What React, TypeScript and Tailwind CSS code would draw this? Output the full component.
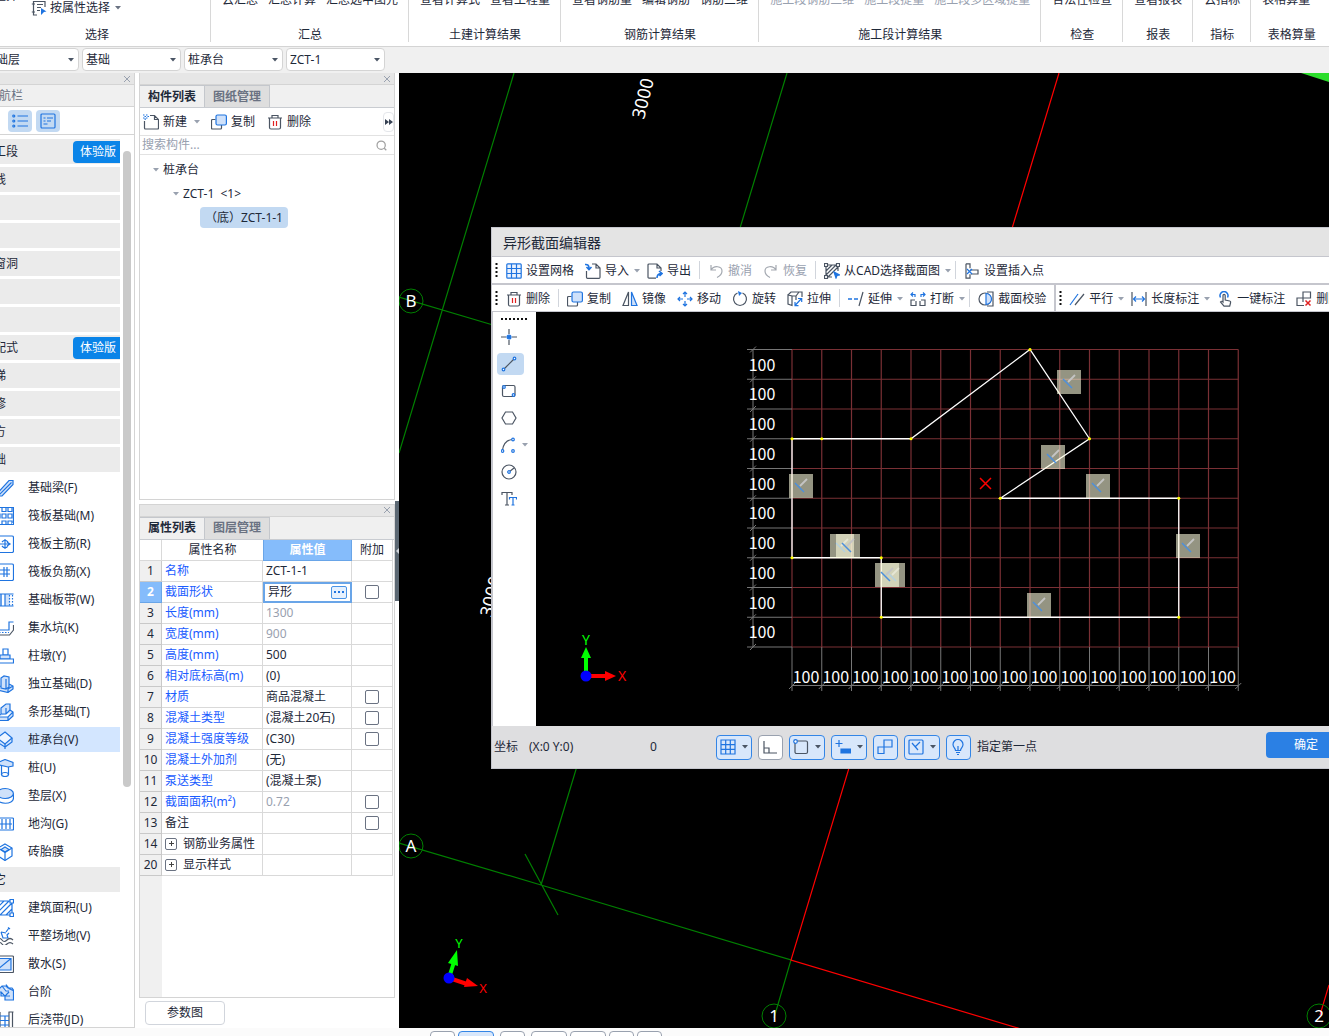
import { Fragment, ReactNode, useState } from "react";
import clsx from "clsx";

const BLUE = "#1f74e0";
const DARK = "#4b5563";
const PALE = "#cfe1fa";

const ribbonGroups = [
  { label: "汇总", items: ["云汇总", "汇总计算", "汇总选中图元"] },
  { label: "土建计算结果", items: ["查看计算式", "查看工程量"] },
  { label: "钢筋计算结果", items: ["查看钢筋量", "编辑钢筋", "钢筋三维"] },
  {
    label: "施工段计算结果",
    items: ["施工段钢筋三维", "施工段提量", "施工段多区域提量"],
    disabled: true,
  },
  { label: "检查", items: ["合法性检查"] },
  { label: "报表", items: ["查看报表"] },
  { label: "指标", items: ["云指标"] },
  { label: "表格算量", items: ["表格算量"] },
];

const filters = [
  { label: "楼层", value: "基础层" },
  { label: "分类", value: "基础" },
  { label: "构件类型", value: "桩承台" },
  { label: "构件", value: "ZCT-1" },
];

type NavItem = { name: string; trial?: boolean; icon?: ReactNode };

const navItems: NavItem[] = [
  { name: "施工段", trial: true },
  { name: "轴线" },
  { name: "柱" },
  { name: "墙" },
  { name: "门窗洞" },
  { name: "梁" },
  { name: "板" },
  { name: "装配式", trial: true },
  { name: "楼梯" },
  { name: "装修" },
  { name: "土方" },
  { name: "基础" },
  {
    name: "基础梁(F)",
    icon: <path d="M2 13.500 13 1.500h4v4L6 17H2zM2 17 15.500 3.500" fill={PALE} />,
  },
  {
    name: "筏板基础(M)",
    icon: (
      <path d="M1 .5h16.500v17H1M6 .5v4h4v-4M12 .5v4h4v-4M6 7h4v4H6zM12 7h4v4h-4zM6 17v-3h4v3M12 17v-3h4v3M1 7h3v4H1" />
    ),
  },
  {
    name: "筏板主筋(R)",
    icon: (
      <>
        <rect x="1" y="1" width="16.500" height="16.500" rx="1.500" />
        <path d="M9 4v10M3 9h10M6 7q3-3.500 6 0M6 11q3 3.500 6 0M11 7l3 2-3 2" />
      </>
    ),
  },
  {
    name: "筏板负筋(X)",
    icon: (
      <>
        <rect x="1" y="1" width="16.500" height="16.500" rx="1.500" />
        <path d="M3 7h11M3 11h11M8 4v10M11 4v10" />
      </>
    ),
  },
  {
    name: "基础板带(W)",
    icon: (
      <>
        <path d="M1 3h5v12H1M9 3h5v12H9" fill={PALE} stroke="none" />
        <path d="M1 3h16.500M1 15h16.500M5 3v12M9 3v12" />
        <path d="M13.500 4v11M16.500 4v11" strokeDasharray="1.500 1.500" />
      </>
    ),
  },
  {
    name: "集水坑(K)",
    icon: (
      <>
        <path d="M17.500 3H13v8H2" />
        <path d="M17.500 6v5l-4 5H2" stroke={DARK} />
        <path d="M3 13.500h10" strokeDasharray="1.500 1.500" />
      </>
    ),
  },
  {
    name: "柱墩(Y)",
    icon: (
      <>
        <path d="M7 2h5v6H7z" fill="#fff" />
        <path d="M4 8h10v4H4z" fill={PALE} />
        <path d="M1 12h16.500v4H1z" fill="#fff" />
      </>
    ),
  },
  {
    name: "独立基础(D)",
    icon: (
      <path d="M5 3l3-2 5 1v10l-3 2-5-1zM10 4v10M1 12l4-1M13 9l4 2v3l-5 3.500L1 15M12 14v3M17 11l-5 3" fill={PALE} />
    ),
  },
  {
    name: "条形基础(T)",
    icon: (
      <path d="M5 5l5-4h4v6l-4 4H5zM10 5v6M14 7l3 2v4l-5 4.500H1v-5l4-1M1 14h11l5-5M12 14v3" fill={PALE} />
    ),
  },
  {
    name: "桩承台(V)",
    icon: (
      <>
        <path d="M9 1l7 6-7 6-8-6z" fill="#eef5ff" />
        <path d="M16 7v4l-7 5V13M1 7v4l8 5v2.500" />
      </>
    ),
  },
  {
    name: "桩(U)",
    icon: (
      <>
        <path d="M3 3l6-2.500 8 3V7l-5 1-9-2z" fill={PALE} />
        <path d="M5.500 7v9M12.500 8v8" />
        <ellipse cx="9" cy="15.500" rx="3.500" ry="2" />
      </>
    ),
  },
  {
    name: "垫层(X)",
    icon: (
      <>
        <path d="M1 7v4c0 7 16.500 7 16.500 0V7" />
        <ellipse cx="9.200" cy="6.500" rx="8.200" ry="5" fill={PALE} />
      </>
    ),
  },
  {
    name: "地沟(G)",
    icon: (
      <>
        <rect x="1" y="3" width="16.500" height="12" rx="1" />
        <path d="M1 9h15M6 4v10M10 4v10M14 4v10" />
      </>
    ),
  },
  {
    name: "砖胎膜",
    icon: (
      <>
        <path d="M9 1l7 4v8l-7 4.500L2 13V5z" />
        <path d="M9 4l4 2.500L9 9 5 6.500z" fill={PALE} />
        <path d="M2 5l7 4.500L16 5M9 9.500v8" />
      </>
    ),
  },
  { name: "其它" },
  {
    name: "建筑面积(U)",
    icon: (
      <>
        <path d="M2 2h14v14H2M2 8l6-6M2 13 13 2M4 16 16 4M10 16l6-6" />
        <path d="M14 .5h3.500V4H14zM14 14h3.500v3.500H14z" fill="#fff" />
      </>
    ),
  },
  {
    name: "平整场地(V)",
    icon: (
      <>
        <path d="M13 1l-3 4M5 5l2 6h5l-1-3 2-2M5 5l5 1M12 .5l2 1.500" />
        <path d="M1 13q3-3 5 0t5 0 6 0M1 17q3-3 5 0t5 0 6 0" stroke={DARK} />
      </>
    ),
  },
  {
    name: "散水(S)",
    icon: (
      <>
        <rect x="1" y="1" width="16.500" height="16.500" rx="1" stroke={DARK} />
        <path d="M1 3.500h14V15H1M1 15 15 3.500" fill={PALE} />
      </>
    ),
  },
  {
    name: "台阶",
    icon: (
      <path d="M1 8l5-5h4l2 2h4l1.500 2v10H9v-4H5V9H1M6 3l4 5h3M10 1.500l3 4 4 2M5 9l4 4h5M9 13l4-4" fill={PALE} />
    ),
  },
  {
    name: "后浇带(JD)",
    icon: (
      <>
        <path d="M4 1v17M13 1v17M16.500 1v17M12.500 1h5M1 1h3" stroke={DARK} />
        <path d="M4 5h9M4 9.500h9M4 14h9M9 5v13" />
      </>
    ),
  },
];

type PropertyRow = {
  no: number;
  name: string;
  value?: string;
  check?: boolean;
  muted?: boolean;
  plain?: boolean;
  group?: boolean;
};

const properties: PropertyRow[] = [
  { no: 1, name: "名称", value: "ZCT-1-1" },
  { no: 2, name: "截面形状", value: "异形", check: true },
  { no: 3, name: "长度(mm)", value: "1300", muted: true },
  { no: 4, name: "宽度(mm)", value: "900", muted: true },
  { no: 5, name: "高度(mm)", value: "500" },
  { no: 6, name: "相对底标高(m)", value: "(0)" },
  { no: 7, name: "材质", value: "商品混凝土", check: true },
  { no: 8, name: "混凝土类型", value: "(混凝土20石)", check: true },
  { no: 9, name: "混凝土强度等级", value: "(C30)", check: true },
  { no: 10, name: "混凝土外加剂", value: "(无)" },
  { no: 11, name: "泵送类型", value: "(混凝土泵)" },
  { no: 12, name: "截面面积(m²)", value: "0.72", check: true, muted: true },
  { no: 13, name: "备注", check: true, plain: true },
  { no: 14, name: "钢筋业务属性", plain: true, group: true },
  { no: 20, name: "显示样式", plain: true, group: true },
];

const Icon = ({
  children,
  size = 16,
  box = 16,
  stroke = DARK,
}: {
  children: ReactNode;
  size?: number;
  box?: number;
  stroke?: string;
}) => (
  <svg
    width={size}
    height={size}
    viewBox={`0 0 ${box} ${box}`}
    fill="none"
    stroke={stroke}
    strokeWidth="1.200"
    className="flex-none"
    aria-hidden="true"
  >
    {children}
  </svg>
);

const Caret = ({ className = "text-gray-400" }: { className?: string }) => (
  <svg width="6" height="4" viewBox="0 0 6 4" className={clsx("flex-none", className)} aria-hidden="true">
    <path d="M0 0h6L3 3.500z" fill="currentColor" />
  </svg>
);

const icons = {
  trash: (
    <Icon>
      <path d="M1 4h14M5 4V1.500h6V4M2.500 4v9.500a1.500 1.500 0 0 0 1.500 1.500h8a1.500 1.500 0 0 0 1.500-1.500V4" />
      <path d="M6.500 7v5M9.500 7v5" stroke="#e02020" />
    </Icon>
  ),
  copy: (
    <Icon>
      <path d="M4.500 5.500h-3a1 1 0 0 0-1 1V14a1 1 0 0 0 1 1h8a1 1 0 0 0 1-1v-3" />
      <rect x="5" y="1" width="10.400" height="10" rx="1.500" fill={PALE} stroke={BLUE} />
    </Icon>
  ),
  create: (
    <Icon>
      <path d="M7 1.500h4.500l4 4V14a1 1 0 0 1-1 1h-12a1 1 0 0 1-1-1V7M11.500 1.500v4h4" />
      <path d="M0 1h1.500M3 1h1.500M1.500 2.500H3M0 4h1.500M3 4h1.500M4.500 2.500H6M1.500 5.200H3" stroke={BLUE} />
    </Icon>
  ),
  grid: (
    <Icon stroke={BLUE}>
      <rect x=".8" y=".8" width="14.400" height="14.400" rx="1" fill="#eaf2fe" />
      <path d="M5.500 1v14M10.500 1v14M1 5.500h14M1 10.500h14" />
    </Icon>
  ),
  importFile: (
    <Icon>
      <path d="M7 1h4l4 4v9.500a1 1 0 0 1-1 .8H2.500a1 1 0 0 1-1-1V8M11 1v4h4" />
      <path d="M0 1.500q4-.5 4 3.500M1.500 4l2.500 2.500L6.500 4" stroke={BLUE} strokeWidth="1.600" />
    </Icon>
  ),
  exportFile: (
    <Icon>
      <path d="M9 15.200H2a1 1 0 0 1-1-1V2a1 1 0 0 1 1-1h8l4 4v3M10 1v4h4" />
      <path d="M10 15q0-4 4-4.500M12 8l3 2.500L12.500 13" stroke={BLUE} strokeWidth="1.600" />
    </Icon>
  ),
  undo: (
    <Icon stroke="#a3a8b0">
      <path d="M3 2v5h5M3 7c3-5 11-4 11 1 0 3-2 5-5 6.500" />
    </Icon>
  ),
  redo: (
    <Icon stroke="#a3a8b0">
      <path d="M13 2v5H8M13 7C10 2 2 3 2 8c0 3 2 5 5 6.500" />
    </Icon>
  ),
  cad: (
    <Icon>
      <path d="M2 2h12v6M2 2v12h6M2 8l6-6M2 12 12 2M4 14 14 4" />
      <path d="M.5.500h3v3h-3zM12.500.500h3v3h-3zM.5 12.500h3v3h-3z" fill="#fff" />
      <path d="M10 9l5.500 3-2.500.5-1 2.500z" fill={BLUE} stroke={BLUE} />
    </Icon>
  ),
  insertPoint: (
    <Icon>
      <path d="M2 .8h4v4.500M2 .8v14.400h4v-4M6 7h8v4H7" />
      <path d="M3 6l5 5M8 6l-5 5" stroke={BLUE} />
    </Icon>
  ),
  mirror: (
    <Icon>
      <path d="M6.500 1v13.500H1z" />
      <path d="M9.500 1v13.500H15z" fill={PALE} stroke={BLUE} />
    </Icon>
  ),
  move: (
    <Icon stroke={BLUE}>
      <path d="M8 1v5M8 10v5M1 8h5M10 8h5M6 3l2-2 2 2M6 13l2 2 2-2M3 6 1 8l2 2M13 6l2 2-2 2" />
    </Icon>
  ),
  rotate: (
    <Icon>
      <path d="M10.500 2a6.500 6.500 0 1 1-5 0" />
      <path d="M6 0l4 2-3 3z" fill={BLUE} stroke="none" />
    </Icon>
  ),
  stretch: (
    <Icon>
      <path d="M1 4l3-3h11v5M1 4v9l4 1.500V5zM5 5h4l3-4M9 5v4" />
      <path d="M8 14.500l6.500-7M11 7.500h3.700v3.500M8 11v3.700h3.500" stroke={BLUE} />
    </Icon>
  ),
  extend: (
    <Icon>
      <path d="M0 8h4M6 8h4" stroke={BLUE} strokeWidth="1.500" />
      <path d="M11 15l4-14" />
    </Icon>
  ),
  breakLine: (
    <Icon>
      <path d="M5 9H1v5.500h5V10M11 9h4v5.500h-5V10" />
      <path d="M1 3.500h4V6M3 1.500l-2 2 2 2M15 3.500h-4V6M13 1.500l2 2-2 2" stroke={BLUE} />
    </Icon>
  ),
  verify: (
    <Icon>
      <path d="M9 1h6v14H9" />
      <circle cx="7" cy="8" r="6" fill="#fff" />
      <path d="M8 2.500a5.500 5.500 0 0 1 0 11z" fill={PALE} stroke={BLUE} />
    </Icon>
  ),
  parallel: (
    <Icon>
      <path d="M1 14 9 3" stroke={BLUE} />
      <path d="M6 14l9-11" />
    </Icon>
  ),
  length: (
    <Icon>
      <path d="M1 1v14M15 1v14" />
      <path d="M2 8h12M5 5.500 2.500 8 5 10.500M11 5.500 13.500 8 11 10.500" stroke={BLUE} />
    </Icon>
  ),
  oneKey: (
    <Icon>
      <path d="M6 11V4.500a1 1 0 0 1 2.200 0V9l4.500 1c1 .2 1 1 .8 2l-.8 3.200H7L3.500 11q1-1.500 2.500 0z" fill="#fff" />
      <path d="M3.500 6.500a4 4 0 1 1 7 0" stroke={BLUE} strokeWidth="1.500" />
    </Icon>
  ),
  removeMark: (
    <Icon>
      <path d="M7 1h7.500v6H7zM7 7H1v7.500h7M7 7v4" />
      <path d="M9.500 9.500l5 5M14.500 9.500l-5 5" stroke="#e02020" strokeWidth="1.500" />
    </Icon>
  ),
};

type Tool = { name: string; icon: ReactNode; caret?: boolean; disabled?: boolean };

// "|" is a thin divider, "||" starts a new dockable group
const fileTools: (Tool | string)[] = [
  { name: "设置网格", icon: icons.grid },
  { name: "导入", icon: icons.importFile, caret: true },
  { name: "导出", icon: icons.exportFile },
  "|",
  { name: "撤消", icon: icons.undo, disabled: true },
  { name: "恢复", icon: icons.redo, disabled: true },
  "|",
  { name: "从CAD选择截面图", icon: icons.cad, caret: true },
  "|",
  { name: "设置插入点", icon: icons.insertPoint },
];

const editTools: (Tool | string)[] = [
  { name: "删除", icon: icons.trash },
  "|",
  { name: "复制", icon: icons.copy },
  { name: "镜像", icon: icons.mirror },
  { name: "移动", icon: icons.move },
  { name: "旋转", icon: icons.rotate },
  { name: "拉伸", icon: icons.stretch },
  "|",
  { name: "延伸", icon: icons.extend, caret: true },
  { name: "打断", icon: icons.breakLine, caret: true },
  "|",
  { name: "截面校验", icon: icons.verify },
  "||",
  { name: "平行", icon: icons.parallel, caret: true },
  { name: "长度标注", icon: icons.length, caret: true },
  { name: "一键标注", icon: icons.oneKey },
  { name: "删除标注", icon: icons.removeMark },
];

const Node = ({ x, y }: { x: number; y: number }) => (
  <circle cx={x} cy={y} r="1.300" stroke={BLUE} fill="#fff" />
);

const drawTools = [
  {
    name: "点",
    icon: (
      <>
        <path d="M8 0v5M8 11v5M0 8h5M11 8h5" />
        <circle cx="8" cy="8" r="2" fill={BLUE} stroke={BLUE} />
      </>
    ),
  },
  {
    name: "直线",
    icon: (
      <>
        <path d="M3.500 12.500l9-9" />
        <Node x={2.5} y={13.5} />
        <Node x={13.5} y={2.5} />
      </>
    ),
  },
  {
    name: "矩形",
    icon: (
      <>
        <rect x="1.500" y="2.500" width="12.500" height="11" rx="1.500" />
        <Node x={3} y={4} />
        <Node x={12.5} y={12} />
      </>
    ),
  },
  { name: "多边形", icon: <path d="M4.500 2h7L15 8l-3.500 6h-7L1 8z" /> },
  {
    name: "弧",
    caret: true,
    icon: (
      <>
        <path d="M1.500 13Q3 3.500 11 2.500" />
        <Node x={1.5} y={14} />
        <Node x={12} y={2.5} />
        <Node x={12} y={14} />
      </>
    ),
  },
  {
    name: "圆",
    icon: (
      <>
        <circle cx="8" cy="8" r="7" />
        <path d="M8 8l5-4" />
        <Node x={8} y={8} />
      </>
    ),
  },
  {
    name: "文字",
    icon: (
      <>
        <path d="M1 4V1.500h10V4M6 1.500V14M4 14h4" />
        <path d="M8.500 8.500v-2h7v2M12 6.500V14M10.500 14h3" stroke={BLUE} />
      </>
    ),
  },
];

const snapTools = [
  { name: "栅格", caret: true, icon: <path d="M1 1h14v14H1zM5.700 1v14M10.300 1v14M1 5.700h14M1 10.300h14" /> },
  { name: "正交", off: true, icon: <path d="M2 2v12h13M2 9h5v5" stroke={DARK} /> },
  {
    name: "对象捕捉",
    caret: true,
    icon: (
      <>
        <rect x="2" y="2" width="12.500" height="12.500" rx="1.500" stroke={DARK} />
        <circle cx="2.500" cy="2.500" r="1.800" fill="#fff" />
      </>
    ),
  },
  {
    name: "动态输入",
    caret: true,
    icon: (
      <>
        <path d="M4 1v7M.5 4.500h7" />
        <path d="M6 10h10v4H6z" fill={BLUE} />
      </>
    ),
  },
  { name: "对齐", icon: <path d="M7 1h8v7H7zM7 8v6.500H1V8h6M7 5v3" /> },
  {
    name: "约束",
    caret: true,
    icon: (
      <>
        <rect x="1" y="1" width="14" height="14" rx="1" />
        <path d="M4 4l6 7M7 8l5-5" />
      </>
    ),
  },
  {
    name: "提示",
    icon: <path d="M5.500 11.500C5.500 9 3 8.500 3 5.500a5 5 0 0 1 10 0c0 3-2.500 3.500-2.500 6zM6 13.500h4M7 15.500h2M8 11V7" />,
  },
];

const PanelStrip = ({ label }: { label: string }) => (
  <div className="flex h-3 flex-none items-center justify-end border-b border-[#d4d4d4] bg-[#e6e6e6] pr-[3px]">
    <button aria-label={label} className="text-gray-400">
      <svg width="8" height="8" viewBox="0 0 8 8" stroke="currentColor">
        <path d="M1 1l6 6M7 1L1 7" />
      </svg>
    </button>
  </div>
);

const PanelTabs = ({ tabs }: { tabs: string[] }) => {
  const [active, setActive] = useState(tabs[0]);

  return (
    <div className="flex h-[23px] flex-none border-b border-[#c9ccd1] bg-[#f0f0f0]">
      {tabs.map((tab) => (
        <button
          key={tab}
          className={clsx(
            "w-[65px] border-t border-r border-[#c4c7cc] text-center font-bold",
            tab === active ? "bg-[#f0f0f0] text-gray-800" : "bg-[#dedede] text-gray-500"
          )}
          onClick={() => setActive(tab)}
        >
          {tab}
        </button>
      ))}
    </div>
  );
};

const Ribbon = () => (
  <header className="flex h-[47px] flex-none overflow-hidden border-b border-[#d4d4d4] bg-white">
    <div className="-ml-4 flex h-[46px] w-[226px] flex-none flex-col justify-end">
      <div className="flex items-end">
        <button className="mb-3.5 flex h-5 w-[34px] justify-end whitespace-nowrap">批量选择</button>
        <button className="mb-1 ml-[13px] flex h-5 items-center">
          <Icon>
            <path d="M6 15H2.500V1.500H14V7M.8 4H4M.8 12H4M6 4.500h6M6 7.500h4M6 10.500h3" />
            <path d="M10 8l5.500 3.500-2.500.5-3 3z" fill={BLUE} stroke="none" />
          </Icon>
          <span className="mr-[5px] ml-[3px]">按属性选择</span>
          <Caret className="text-gray-500" />
        </button>
      </div>
      <div className="h-6 text-center leading-[26px]">选择</div>
    </div>
    {ribbonGroups.map((group) => (
      <Fragment key={group.label}>
        <div className="h-[42px] w-px flex-none bg-[#d8d8d8]" />
        <div className="flex h-[46px] flex-none flex-col justify-end pr-[10px] pl-[11px] last:w-[80px]">
          <div className={clsx("mb-3.5 flex h-5 gap-[10px]", group.disabled && "text-gray-400")}>
            {group.items.map((item) => (
              <button key={item} disabled={group.disabled}>
                {item}
              </button>
            ))}
          </div>
          <div className="h-6 text-center leading-[26px]">{group.label}</div>
        </div>
      </Fragment>
    ))}
  </header>
);

const FilterBar = () => (
  <div className="flex h-[26px] flex-none items-start overflow-hidden bg-[#f0f0f0] pt-px">
    <div className="-ml-[20px] flex gap-[3px]">
      {filters.map((filter) => (
        <div key={filter.label} className="relative">
          <select
            aria-label={filter.label}
            className="h-[23px] w-[99px] appearance-none rounded-sm border border-[#d4d4d4] bg-white pl-[3px]"
            defaultValue={filter.value}
          >
            <option>{filter.value}</option>
          </select>
          <Caret className="pointer-events-none absolute top-[10px] right-[5px] text-gray-600" />
        </div>
      ))}
    </div>
  </div>
);

const Navigation = () => {
  const [selected, setSelected] = useState("桩承台(V)");

  return (
    <nav className="flex w-[135px] flex-none flex-col overflow-hidden border-r border-b border-[#d4d4d4] bg-white">
      <PanelStrip label="关闭导航栏" />
      <div className="-ml-[13px] h-[22px] flex-none border-b border-[#d4d4d4] bg-[#f0f0f0] leading-[22px] text-gray-500">
        导航栏
      </div>
      <div className="flex h-7 flex-none items-center gap-1 border-b border-[#d4d4d4] pl-2">
        <button aria-label="列表" className="flex h-[22px] w-6 items-center justify-center rounded-sm bg-[#c2d9f2]">
          <Icon stroke={BLUE}>
            <path d="M5.500 3H16M5.500 8H16M5.500 13H16" />
            <circle cx="1.800" cy="3" r="1" />
            <circle cx="1.800" cy="8" r="1" />
            <circle cx="1.800" cy="13" r="1" />
          </Icon>
        </button>
        <button aria-label="卡片" className="flex h-[22px] w-6 items-center justify-center rounded-sm bg-[#c2d9f2]">
          <Icon stroke={BLUE}>
            <rect x="1" y="1" width="14" height="14" rx="1" />
            <path d="M3.500 5h2M7 5h6M3.500 8h2M7 8h4M3.500 11h4" />
          </Icon>
        </button>
      </div>
      <div className="flex min-h-0 flex-1 pt-1">
        <ul className="-ml-[30px] w-[150px] flex-none space-y-[3px] overflow-hidden">
          {navItems.map((item) => (
            <li key={item.name}>
              {item.icon ? (
                <button
                  className={clsx(
                    "flex h-[25px] w-full items-center gap-3.5 pl-[26px]",
                    item.name === selected && "bg-[#d3e6ff]"
                  )}
                  onClick={() => setSelected(item.name)}
                >
                  <Icon size={18} box={18} stroke={BLUE}>
                    {item.icon}
                  </Icon>
                  {item.name}
                </button>
              ) : (
                <button className="flex h-[25px] w-full items-center justify-between bg-[#ebebeb] pl-3">
                  {item.name}
                  {item.trial && (
                    <span className="h-[22px] rounded-l-sm bg-[#0a84e8] pr-1 pl-[7px] leading-[22px] text-white">
                      体验版
                    </span>
                  )}
                </button>
              )}
            </li>
          ))}
        </ul>
        <div className="mt-3 ml-[3px] h-[636px] w-2 rounded-full bg-[#c9c9c9]" />
      </div>
    </nav>
  );
};

const ComponentList = () => (
  <section className="flex min-h-0 flex-[426] flex-col border border-t-0 border-[#d4d4d4] bg-white">
    <PanelStrip label="关闭构件列表" />
    <PanelTabs tabs={["构件列表", "图纸管理"]} />
    <div className="flex h-7 flex-none items-center border-b border-[#e2e2e2] pl-[3px]">
      <button className="flex items-center gap-1">
        {icons.create}
        新建
        <Caret className="ml-[3px] text-gray-400" />
      </button>
      <button className="ml-[11px] flex items-center gap-1">
        {icons.copy}
        复制
      </button>
      <button className="ml-3 flex items-center gap-1">
        {icons.trash}
        删除
      </button>
      <button aria-label="更多" className="ml-auto flex h-5 w-[11px] items-center justify-center rounded-sm border border-gray-200">
        <svg width="8" height="6" viewBox="0 0 8 6" className="flex-none fill-gray-700">
          <path d="M0 0l4 3-4 3zM4 0l4 3-4 3z" />
        </svg>
      </button>
    </div>
    <label className="flex h-[19px] flex-none items-center border-b border-[#e2e2e2] pr-[7px] pl-[2px]">
      <input
        type="text"
        aria-label="搜索构件"
        placeholder="搜索构件..."
        className="min-w-0 flex-1 outline-none placeholder:text-gray-400"
      />
      <Icon size={11} stroke="#a0a0a0">
        <circle cx="7.500" cy="7.500" r="6" strokeWidth="1.800" />
        <path d="M12 12l3 3" strokeWidth="1.800" />
      </Icon>
    </label>
    <ul className="min-h-0 flex-1 overflow-hidden pt-[3px] leading-6">
      <li className="flex items-center gap-1 pl-[13px]">
        <Caret />
        桩承台
      </li>
      <li className="flex items-center gap-1 pl-[33px]">
        <Caret />
        ZCT-1 &nbsp;&lt;1&gt;
      </li>
      <li className="pl-[60px]">
        <button className="h-[21px] rounded-sm bg-[#c2d9f2] px-[5px] leading-[21px]">（底）ZCT-1-1</button>
      </li>
    </ul>
  </section>
);

const PropertyTable = () => {
  const [checked, setChecked] = useState<number[]>([]);

  const toggle = (no: number) =>
    setChecked((prev) => (prev.includes(no) ? prev.filter((item) => item !== no) : [...prev, no]));

  return (
    <div className="flex min-h-0 flex-1 flex-col">
      <table className="w-full flex-none table-fixed border-separate border-spacing-0">
        <colgroup>
          <col className="w-[22px]" />
          <col />
          <col className="w-[89px]" />
          <col className="w-[41px]" />
        </colgroup>
        <thead>
          <tr className="h-[21px]">
            <th className="border-r border-b border-[#d9d9d9]" />
            <th className="border-b border-[#d9d9d9] p-0 font-normal">属性名称</th>
            <th className="border border-t-0 border-[#69a5e8] bg-[#85bcfb] p-0 text-white">属性值</th>
            <th className="border-r border-b border-[#d9d9d9] p-0 font-normal">附加</th>
          </tr>
        </thead>
        <tbody>
          {properties.map((row) => {
            const current = row.no === 2;
            return (
              <tr key={row.no} className="h-[21px]">
                <th
                  className={clsx(
                    "border-r border-b p-0 text-center",
                    current
                      ? "border-[#69a5e8] bg-[#85bcfb] text-white"
                      : "border-[#c9c9c9] bg-[#f0f0f0] font-normal"
                  )}
                >
                  {row.no}
                </th>
                <td
                  className={clsx(
                    "border-r border-b border-[#d9d9d9] p-0 pl-[3px] whitespace-nowrap",
                    !row.plain && "text-[#1a5cff]"
                  )}
                >
                  {row.group ? (
                    <span className="flex items-center gap-1.5">
                      <button
                        aria-label={`展开${row.name}`}
                        className="flex size-3 items-center justify-center rounded-xs border border-gray-500"
                      >
                        <svg width="5" height="5" viewBox="0 0 5 5" stroke="#444">
                          <path d="M2.500 0v5M0 2.500h5" />
                        </svg>
                      </button>
                      {row.name}
                    </span>
                  ) : (
                    row.name
                  )}
                </td>
                <td
                  className={clsx(
                    "p-0 pl-[3px] whitespace-nowrap",
                    current ? "border-2 border-[#69a5e8]" : "border-r border-b border-[#d9d9d9]",
                    row.muted && "text-gray-400"
                  )}
                >
                  {current ? (
                    <span className="flex h-[17px] items-center justify-between pr-[3px]">
                      {row.value}
                      <button
                        aria-label="编辑截面"
                        className="flex h-[13px] w-4 items-center justify-center rounded-xs border border-[#4a94e6] bg-[#e6f1fe]"
                      >
                        <svg width="10" height="2" viewBox="0 0 10 2" fill={BLUE}>
                          <path d="M0 0h2v2H0zM4 0h2v2H4zM8 0h2v2H8z" />
                        </svg>
                      </button>
                    </span>
                  ) : (
                    row.value
                  )}
                </td>
                <td className="border-r border-b border-[#d9d9d9] p-0">
                  {row.check && (
                    <input
                      type="checkbox"
                      aria-label={`附加${row.name}`}
                      className="mx-auto block size-3.5 appearance-none rounded-xs border border-gray-500 bg-white checked:bg-[#85bcfb]"
                      checked={checked.includes(row.no)}
                      onChange={() => toggle(row.no)}
                    />
                  )}
                </td>
              </tr>
            );
          })}
        </tbody>
      </table>
      <div className="w-[22px] flex-1 bg-[#f0f0f0]" />
    </div>
  );
};

const PropertyPanel = () => (
  <section className="flex min-h-0 flex-[525] flex-col bg-white">
    <div className="flex min-h-0 flex-1 flex-col border border-[#d4d4d4]">
      <PanelStrip label="关闭属性列表" />
      <PanelTabs tabs={["属性列表", "图层管理"]} />
      <div className="flex min-h-0 flex-1 flex-col pr-px">
        <PropertyTable />
      </div>
    </div>
    <div className="flex h-[30px] flex-none items-start pt-[3px] pl-1.5">
      <button className="h-6 w-20 rounded-sm border border-gray-300 bg-white">参数图</button>
    </div>
  </section>
);

const AxisBubble = ({ x, y, label }: { x: number; y: number; label: string }) => (
  <g>
    <circle cx={x} cy={y} r="12" fill="none" stroke="#008000" />
    <text x={x} y={y + 6} fill="#fff" fontSize="17" textAnchor="middle">
      {label}
    </text>
  </g>
);

const ModelCanvas = () => (
  <svg className="absolute inset-0 size-full" aria-label="轴网">
    <g stroke="#008000" strokeWidth="1.200" fill="none">
      <path d="M115 0 0 380M388 0 142 812M0 224l94 28M0 770l142 42 250 75-17 58M126 781l33 61" />
    </g>
    <path d="M660 0 392 887l330 99M930 912l-9 30" stroke="#f00" strokeWidth="1.200" fill="none" />
    <path d="M902 0h28v9z" fill="#2bdd2b" />
    <g fill="#fff" fontSize="18">
      <text transform="translate(250 27) rotate(-76)" textAnchor="middle" x="0" y="0">
        3000
      </text>
      <text transform="translate(98 525) rotate(-76)" textAnchor="middle" x="0" y="0">
        3000
      </text>
    </g>
    <AxisBubble x={12} y={228} label="B" />
    <AxisBubble x={12} y={773} label="A" />
    <AxisBubble x={375} y={943} label="1" />
    <AxisBubble x={920} y={943} label="2" />
    <path d="M50 905l5-16" stroke="#0f0" strokeWidth="4" />
    <path d="M58 877l-9 13 10 3z" fill="#0f0" />
    <path d="M50 905l18 6" stroke="#f00" strokeWidth="4" />
    <path d="M79 913l-11-8-3 9z" fill="#f00" />
    <circle cx="50" cy="905" r="5.500" fill="#00f" />
    <text x="60" y="875" fill="#0f0" fontSize="13" textAnchor="middle">
      Y
    </text>
    <text x="84" y="920" fill="#f00" fontSize="13" textAnchor="middle">
      X
    </text>
  </svg>
);

const CELL = 29.75;
const GRID_X = 256;
const GRID_Y = 37.5;
const COLS = 15;
const ROWS = 10;

const gx = (col: number) => GRID_X + col * CELL;
const gy = (row: number) => GRID_Y + row * CELL;

const outline = [
  [0, 3],
  [1, 3],
  [4, 3],
  [8, 0],
  [10, 3],
  [7, 5],
  [13, 5],
  [13, 9],
  [3, 9],
  [3, 7],
  [0, 7],
];

const constraints = [
  [253, 162],
  [521, 58],
  [505, 133],
  [550, 162],
  [640, 222],
  [491, 281],
  [294, 222],
  [300, 222],
  [345, 251],
  [339, 251],
];

const range = (count: number) => Array.from({ length: count }, (_, index) => index);

const SectionCanvas = () => (
  <svg className="h-[414px] min-w-0 flex-1 bg-black" aria-label="异形截面">
    <g stroke="#7a3035" strokeWidth="1.200">
      {range(COLS + 1).map((col) => (
        <line key={col} x1={gx(col)} x2={gx(col)} y1={gy(0)} y2={gy(ROWS)} />
      ))}
      {range(ROWS + 1).map((row) => (
        <line key={row} x1={gx(0)} x2={gx(COLS)} y1={gy(row)} y2={gy(row)} />
      ))}
    </g>
    <g stroke="#777">
      <line x1="217" x2="217" y1={gy(0)} y2={gy(ROWS)} />
      <line x1={gx(0)} x2={gx(COLS)} y1="373.500" y2="373.500" />
      {range(ROWS + 1).map((row) => (
        <path key={row} d={`M211 ${gy(row)}H${GRID_X}M214 ${gy(row) + 3}l6 -6`} />
      ))}
      {range(COLS + 1).map((col) => (
        <path key={col} d={`M${gx(col)} ${gy(ROWS)}V379M${gx(col) - 3} 377l6 -6`} />
      ))}
    </g>
    <g fill="#fff" fontSize="16" textAnchor="middle" className="font-['Noto_Sans_CJK_SC',sans-serif]">
      {range(ROWS).map((row) => (
        <text key={row} x="226" y={gy(row) + 21}>
          100
        </text>
      ))}
      {range(COLS).map((col) => (
        <text key={col} x={gx(col) + 14} y="371">
          100
        </text>
      ))}
    </g>
    <polygon points={outline.map(([col, row]) => `${gx(col)},${gy(row)}`).join(" ")} fill="none" stroke="#fff" strokeWidth="1.300" />
    {constraints.map(([x, y]) => (
      <g key={`${x}-${y}`} transform={`translate(${x} ${y})`}>
        <rect width="24" height="24" fill="#ffffe0" fillOpacity=".58" />
        <path d="M11 12l7-7" stroke="#c4c4c4" strokeWidth="1.800" />
        <path d="M6 9l9 9" stroke="#4c8fdc" strokeWidth="1.500" />
      </g>
    ))}
    {outline.map(([col, row]) => (
      <circle key={`${col}-${row}`} cx={gx(col)} cy={gy(row)} r="1.500" fill="#ff0" />
    ))}
    <path d="M444 166l11 11M455 166l-11 11" stroke="#f00" strokeWidth="1.500" />
    <path d="M50 364v-20" stroke="#0f0" strokeWidth="4" />
    <path d="M50 335l5 11H45z" fill="#0f0" />
    <path d="M50 364h20" stroke="#f00" strokeWidth="4" />
    <path d="M80 364l-11-5v10z" fill="#f00" />
    <circle cx="50" cy="364" r="5.500" fill="#00f" />
    <text x="50" y="333" fill="#0f0" fontSize="14" textAnchor="middle">
      Y
    </text>
    <text x="86" y="369" fill="#f00" fontSize="14" textAnchor="middle">
      X
    </text>
  </svg>
);

const Grip = () => (
  <svg width="3" height="15" viewBox="0 0 3 15" className="flex-none" aria-hidden="true">
    <path d="M.5 0h2v2h-2zM.5 4h2v2h-2zM.5 8h2v2h-2zM.5 12h2v2h-2z" fill="#111" />
  </svg>
);

const ToolBar = ({ tools, className }: { tools: (Tool | string)[]; className: string }) => (
  <div className={clsx("flex flex-none items-center gap-2 border-[#c5c6cd] bg-white pl-[3px]", className)}>
    <Grip />
    <div className="flex h-full items-center gap-[7px]">
      {tools.map((tool, index) => {
        if (tool === "|") return <div key={index} className="mr-px -ml-[3px] h-[18px] w-px bg-gray-300" />;
        if (typeof tool === "string") {
          return (
            <div key={index} className="-ml-[3px] flex h-full items-center border-l-2 border-[#c5c6cd] pl-[3px]">
              <Grip />
            </div>
          );
        }
        return (
          <button
            key={index}
            disabled={tool.disabled}
            className={clsx(
              "flex flex-none items-center pt-0.5 whitespace-nowrap",
              tool.disabled && "text-gray-400",
              !tool.caret && "pr-1"
            )}
          >
            {tool.icon}
            <span className="ml-1">{tool.name}</span>
            {tool.caret && <Caret className="ml-[5px] text-gray-400" />}
          </button>
        );
      })}
    </div>
  </div>
);

const SectionEditor = () => {
  const [drawTool, setDrawTool] = useState("直线");

  return (
    <div
      role="dialog"
      aria-label="异形截面编辑器"
      className="absolute top-[154px] -right-10 left-[92px] flex flex-col border border-[#c5c6cd] bg-[#dedee0]"
    >
      <h2 className="h-[29px] flex-none border-b border-[#c5c6cd] bg-[#e4e4e4] pl-[11px] text-sm leading-[29px]">
        异形截面编辑器
      </h2>
      <ToolBar tools={fileTools} className="h-7 border-b-2" />
      <ToolBar tools={editTools} className="h-[27px] border-b" />
      <div className="flex">
        <div className="flex w-11 flex-none flex-col gap-[5px] border-l border-[#c5c6cd] bg-white pt-1.5 pl-1">
          <svg width="27" height="3" viewBox="0 0 27 3" className="ml-1 flex-none" aria-hidden="true">
            <path d="M0 1h27" stroke="#111" strokeWidth="2" strokeDasharray="2 2" />
          </svg>
          {drawTools.map((tool) => (
            <div key={tool.name} className="flex items-center">
              <button
                aria-label={tool.name}
                className={clsx(
                  "flex h-[22px] w-[27px] flex-none items-center rounded-sm pl-1",
                  tool.name === drawTool && "bg-[#c2d9f2]"
                )}
                onClick={() => setDrawTool(tool.name)}
              >
                <Icon>{tool.icon}</Icon>
              </button>
              {tool.caret && <Caret className="-ml-0.5 text-gray-400" />}
            </div>
          ))}
        </div>
        <SectionCanvas />
      </div>
      <div className="flex h-[42px] flex-none items-center pr-[22px] pl-[2px]">
        <span className="w-[35px]">坐标</span>
        <span className="w-[121px]">(X:0 Y:0)</span>
        <span className="w-[66px]">0</span>
        <div className="mr-[6px] flex gap-[6px]">
          {snapTools.map((tool) => (
            <button
              key={tool.name}
              aria-label={tool.name}
              className={clsx(
                "flex h-[25px] items-center justify-between rounded-sm border px-[3px]",
                tool.caret ? "w-9" : "w-[25px]",
                tool.off ? "border-gray-400 bg-white" : "border-[#3385e6] bg-[#d8e7fb]"
              )}
            >
              <Icon stroke={BLUE}>{tool.icon}</Icon>
              {tool.caret && <Caret className="text-gray-600" />}
            </button>
          ))}
        </div>
        指定第一点
        <button className="mb-1 ml-auto h-[26px] w-20 rounded-sm bg-[#2b80e4] text-white">确定</button>
      </div>
    </div>
  );
};

const footerButtons = ["w-[25px]", "w-9", "w-[25px] ml-[3px]", "w-9 ml-[3px]", "w-9", "w-[25px]", "w-[25px]"];

const App = () => (
  <div className="flex h-screen flex-col overflow-hidden bg-white font-['Noto_Sans','Noto_Sans_CJK_SC',sans-serif] text-xs text-gray-800">
    <Ribbon />
    <FilterBar />
    <main className="flex min-h-0 flex-1">
      <Navigation />
      <div className="ml-1 flex w-[256px] flex-none flex-col gap-1">
        <ComponentList />
        <PropertyPanel />
      </div>
      <div className="flex w-1 flex-none items-center">
        <button
          aria-label="收起面板"
          className="flex h-[100px] w-1 items-center justify-center bg-[#5c6873] text-gray-300"
        >
          <svg width="3" height="6" viewBox="0 0 3 6" fill="currentColor">
            <path d="M3 0v6L0 3z" />
          </svg>
        </button>
      </div>
      <div className="relative min-w-0 flex-1 overflow-hidden bg-black">
        <ModelCanvas />
        <SectionEditor />
      </div>
    </main>
    <footer className="flex h-2 flex-none items-start gap-[3px] overflow-hidden bg-[#fbfbfb] pt-[3px] pl-[430px]">
      {footerButtons.map((width, index) => (
        <button
          key={index}
          aria-label={`状态 ${index + 1}`}
          className={clsx(
            "h-6 flex-none rounded-sm border",
            width,
            index === 1 ? "border-[#3385e6] bg-[#d8e7fb]" : "border-gray-400 bg-white"
          )}
        />
      ))}
    </footer>
  </div>
);

export default App;
